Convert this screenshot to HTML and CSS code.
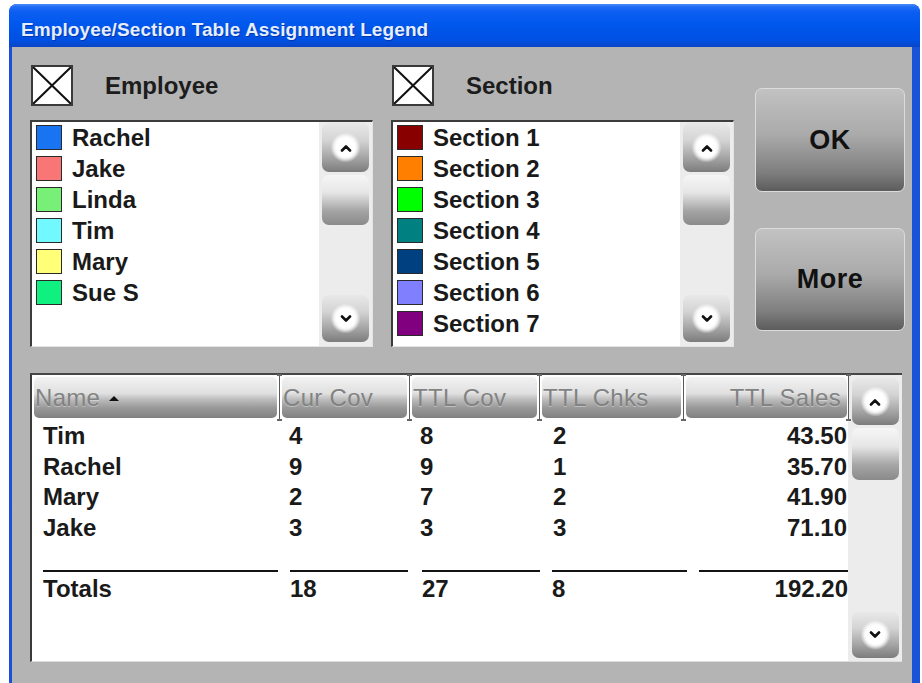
FILE: index.html
```html
<!DOCTYPE html>
<html lang="en">
<head>
<meta charset="utf-8">
<title>Employee/Section Table Assignment Legend</title>
<link rel="stylesheet" href="styles.css">
</head>
<body>
<div class="window">
  <div class="titlebar">Employee/Section Table Assignment Legend</div>
  <div class="client">
    <div class="top">
      <section class="legend">
        <div class="legend-head">
          <span class="check"><svg viewBox="0 0 38 37" width="38" height="37"><path d="M0 0 L38 37 M38 0 L0 37" stroke="#111" stroke-width="2" fill="none"/></svg></span>
          <span class="legend-label">Employee</span>
        </div>
        <div class="listbox">
          <ul class="items">
            <li><span class="swatch" style="--c:#1874f0"></span>Rachel</li>
            <li><span class="swatch" style="--c:#f87676"></span>Jake</li>
            <li><span class="swatch" style="--c:#78f078"></span>Linda</li>
            <li><span class="swatch" style="--c:#72f8ff"></span>Tim</li>
            <li><span class="swatch" style="--c:#ffff78"></span>Mary</li>
            <li><span class="swatch" style="--c:#10f080"></span>Sue S</li>
          </ul>
          <div class="vscroll">
            <button class="sbtn sbtn-up"><svg viewBox="0 0 12 8" width="12" height="8"><path d="M2 6.5 L6 2.5 L10 6.5" stroke="#111" stroke-width="2.6" fill="none" stroke-linecap="round" stroke-linejoin="round"/></svg></button>
            <div class="thumb"></div>
            <button class="sbtn sbtn-down"><svg viewBox="0 0 12 8" width="12" height="8"><path d="M2 1.5 L6 5.5 L10 1.5" stroke="#111" stroke-width="2.6" fill="none" stroke-linecap="round" stroke-linejoin="round"/></svg></button>
          </div>
        </div>
      </section>

      <section class="legend">
        <div class="legend-head">
          <span class="check"><svg viewBox="0 0 38 37" width="38" height="37"><path d="M0 0 L38 37 M38 0 L0 37" stroke="#111" stroke-width="2" fill="none"/></svg></span>
          <span class="legend-label">Section</span>
        </div>
        <div class="listbox">
          <ul class="items">
            <li><span class="swatch" style="--c:#880000"></span>Section 1</li>
            <li><span class="swatch" style="--c:#ff8000"></span>Section 2</li>
            <li><span class="swatch" style="--c:#00ff00"></span>Section 3</li>
            <li><span class="swatch" style="--c:#008080"></span>Section 4</li>
            <li><span class="swatch" style="--c:#004080"></span>Section 5</li>
            <li><span class="swatch" style="--c:#8080ff"></span>Section 6</li>
            <li><span class="swatch" style="--c:#800080"></span>Section 7</li>
          </ul>
          <div class="vscroll">
            <button class="sbtn sbtn-up"><svg viewBox="0 0 12 8" width="12" height="8"><path d="M2 6.5 L6 2.5 L10 6.5" stroke="#111" stroke-width="2.6" fill="none" stroke-linecap="round" stroke-linejoin="round"/></svg></button>
            <div class="thumb"></div>
            <button class="sbtn sbtn-down"><svg viewBox="0 0 12 8" width="12" height="8"><path d="M2 1.5 L6 5.5 L10 1.5" stroke="#111" stroke-width="2.6" fill="none" stroke-linecap="round" stroke-linejoin="round"/></svg></button>
          </div>
        </div>
      </section>

      <div class="actions">
        <button class="action action-ok">OK</button>
        <button class="action action-more">More</button>
      </div>
    </div>

    <div class="table-panel">
      <div class="grid">
        <div class="row thead">
          <div class="th">Name <span class="sort"></span></div>
          <div class="th">Cur Cov</div>
          <div class="th">TTL Cov</div>
          <div class="th">TTL Chks</div>
          <div class="th th-num">TTL Sales</div>
        </div>
        <div class="tbody">
          <div class="row tr"><div class="td c1">Tim</div><div class="td c2">4</div><div class="td c3">8</div><div class="td c4">2</div><div class="td c5">43.50</div></div>
          <div class="row tr"><div class="td c1">Rachel</div><div class="td c2">9</div><div class="td c3">9</div><div class="td c4">1</div><div class="td c5">35.70</div></div>
          <div class="row tr"><div class="td c1">Mary</div><div class="td c2">2</div><div class="td c3">7</div><div class="td c4">2</div><div class="td c5">41.90</div></div>
          <div class="row tr"><div class="td c1">Jake</div><div class="td c2">3</div><div class="td c3">3</div><div class="td c4">3</div><div class="td c5">71.10</div></div>
          <div class="row tr totals"><div class="td c1">Totals</div><div class="td c2">18</div><div class="td c3">27</div><div class="td c4">8</div><div class="td c5">192.20</div></div>
        </div>
      </div>
      <div class="vscroll vscroll-table">
        <button class="sbtn sbtn-up"><svg viewBox="0 0 12 8" width="12" height="8"><path d="M2 6.5 L6 2.5 L10 6.5" stroke="#111" stroke-width="2.6" fill="none" stroke-linecap="round" stroke-linejoin="round"/></svg></button>
        <div class="thumb"></div>
        <button class="sbtn sbtn-down"><svg viewBox="0 0 12 8" width="12" height="8"><path d="M2 1.5 L6 5.5 L10 1.5" stroke="#111" stroke-width="2.6" fill="none" stroke-linecap="round" stroke-linejoin="round"/></svg></button>
      </div>
    </div>
  </div>
</div>
</body>
</html>
```

FILE: styles.css
```css
* {
  box-sizing: border-box;
}

html, body {
  margin: 0;
  padding: 0;
  background: #ffffff;
  overflow: hidden;
}

body {
  font-family: "Liberation Sans", Arial, sans-serif;
  color: #141414;
}

/* ---- window frame ---- */
.window {
  margin: 4px 0 0 9px;
  width: 911px;
  height: 679px;
  display: flex;
  flex-direction: column;
  background: linear-gradient(to right, #1650dc 0, #2462ec 50%, #1a52d8 100%);
  border-radius: 8px 8px 0 0;
  overflow: hidden;
}

.titlebar {
  height: 43px;
  flex: none;
  padding: 8px 0 0 12px;
  line-height: 35px;
  font-size: 19px;
  font-weight: bold;
  letter-spacing: 0.1px;
  color: #e6eeff;
  text-shadow: 1px 1px 0 rgba(0, 20, 90, 0.45);
  background: linear-gradient(to bottom,
    #4a8ef8 0,
    #1f6cf4 3px,
    #0c5ef2 8px,
    #0057ec 50%,
    #0050e2 85%,
    #0a45c4 100%);
}

.client {
  flex: 1;
  margin: 0 8px 0 3px;
  padding: 18px 0 0 18px;
  background: #b4b4b4;
}

/* ---- upper area: two legends and the action buttons ---- */
.top {
  display: flex;
  align-items: flex-start;
}

.legend {
  width: 343px;
}

.legend + .legend {
  margin-left: 18px;
}

.legend-head {
  height: 41px;
  display: flex;
  align-items: center;
}

.check {
  width: 42px;
  height: 41px;
  margin-left: 1px;
  background: #ffffff;
  border: 2px solid #3a3a3a;
  display: block;
}

.check svg {
  display: block;
}

.legend-label {
  margin-left: 32px;
  font-size: 24px;
  font-weight: bold;
  color: #1c1c1c;
}

.listbox {
  margin-top: 14px;
  height: 227px;
  display: flex;
  background: #ffffff;
  border-top: 2px solid #3c3c3c;
  border-left: 2px solid #3c3c3c;
  border-right: 1px solid #e4e4e4;
  border-bottom: 1px solid #e4e4e4;
}

.items {
  flex: 1;
  margin: 0;
  padding: 0 0 0 4px;
  list-style: none;
}

.items li {
  height: 31px;
  display: flex;
  align-items: center;
  gap: 10px;
  font-size: 24px;
  font-weight: bold;
  color: #1a1a1a;
  white-space: nowrap;
}

.swatch {
  width: 26px;
  height: 25px;
  flex: none;
  background: var(--c);
  border: 1.5px solid #2a2a2a;
}

/* ---- scroll bars ---- */
.vscroll {
  width: 53px;
  flex: none;
  display: flex;
  flex-direction: column;
  align-items: center;
  padding: 1px 0 4px;
  background: #ececec;
}

.sbtn {
  width: 47px;
  height: 49px;
  padding: 0;
  border: none;
  border-radius: 7px;
  display: flex;
  align-items: center;
  justify-content: center;
  background:
    radial-gradient(circle at 50% 50%, #ffffff 0, #ffffff 9px, rgba(255, 255, 255, 0.85) 11px, rgba(255, 255, 255, 0) 15px),
    linear-gradient(to bottom, #e8e8e8 0%, #d4d4d4 35%, #a6a6a6 70%, #7c7c7c 100%);
}

.sbtn svg {
  display: block;
}

.sbtn-down {
  margin-top: auto;
  height: 47px;
}

.thumb {
  width: 47px;
  height: 50px;
  margin-top: 3px;
  border-radius: 7px;
  background: linear-gradient(to bottom, #f6f6f6 0%, #e6e6e6 35%, #a4a4a4 72%, #8a8a8a 100%);
}

/* ---- OK / More ---- */
.actions {
  margin-left: 21px;
  margin-top: 23px;
  width: 150px;
  display: flex;
  flex-direction: column;
  gap: 36px;
}

.action {
  width: 150px;
  height: 104px;
  padding: 0;
  border: 1px solid #dcdcdc;
  border-radius: 7px;
  font-family: "Liberation Sans", Arial, sans-serif;
  font-size: 27px;
  font-weight: bold;
  color: #111111;
  letter-spacing: 0.5px;
  background: linear-gradient(to bottom, #c2c2c2 0%, #aaaaaa 45%, #7e7e7e 82%, #5c5c5c 100%);
}

.action-more {
  height: 103px;
}

/* ---- sales table ---- */
.table-panel {
  margin-top: 26px;
  width: 872px;
  height: 289px;
  display: flex;
  background: #ffffff;
  border-top: 2px solid #464646;
  border-left: 2px solid #3a3a3a;
  border-bottom: 1px solid #dedede;
}

.grid {
  flex: 1;
  padding: 2px 0 0 2px;
}

.row {
  display: grid;
  grid-template-columns: 243px 125px 125px 139px 161px;
  column-gap: 5px;
}

.thead {
  height: 41px;
}

.th {
  position: relative;
  height: 41px;
  padding-left: 1px;
  border-radius: 5px;
  font-size: 24px;
  line-height: 41px;
  letter-spacing: 0.3px;
  color: #828282;
  white-space: nowrap;
  text-shadow: 0 1px 0 rgba(255, 255, 255, 0.35);
  background: linear-gradient(to bottom, #f2f2f2 0%, #e0e0e0 40%, #bcbcbc 55%, #999999 75%, #808080 100%);
}

/* column resize handle sitting in the gap to the right of each header */
.th::after {
  content: "";
  position: absolute;
  top: -3px;
  bottom: -3px;
  right: -5px;
  width: 5px;
  border-top: 2px solid #666;
  border-bottom: 2px solid #666;
  background: linear-gradient(to right, transparent 2px, #5a5a5a 2px, #5a5a5a 3px, transparent 3px);
}

.th-num {
  text-align: right;
  padding-right: 6px;
}

.th-num::after {
  right: -4px;
}

.sort {
  display: inline-block;
  width: 0;
  height: 0;
  margin-left: 2px;
  vertical-align: 5px;
  border-left: 5px solid transparent;
  border-right: 5px solid transparent;
  border-bottom: 5px solid #111;
}

.tbody {
  padding-top: 3px;
}

.tr {
  height: 30.5px;
  font-size: 24px;
  font-weight: bold;
  line-height: 30.5px;
  color: #1a1a1a;
}

.td {
  white-space: nowrap;
}

.c1 { padding-left: 9px; }
.c2 { padding-left: 7px; }
.c3 { padding-left: 8px; }
.c4 { padding-left: 11px; }
.c5 { text-align: right; }

.totals {
  margin-top: 27px;
  height: 36px;
  line-height: 34px;
}

.totals .td {
  border-top: 2px solid #141414;
  padding-left: 0;
}

.totals .c1 { margin-left: 9px; margin-right: -1px; }
.totals .c2 { margin-left: 8px; margin-right: -1px; }
.totals .c3 { margin-left: 10px; margin-right: -3px; }
.totals .c4 { margin-left: 10px; margin-right: -6px; }
.totals .c5 { margin-left: 13px; margin-right: -1px; }

.vscroll-table {
  width: 54px;
  padding: 3px 0 3px;
}

.vscroll-table .sbtn-up {
  height: 47px;
}

.vscroll-table .thumb {
  height: 52px;
}

.vscroll-table .sbtn-down {
  height: 46px;
}
```
